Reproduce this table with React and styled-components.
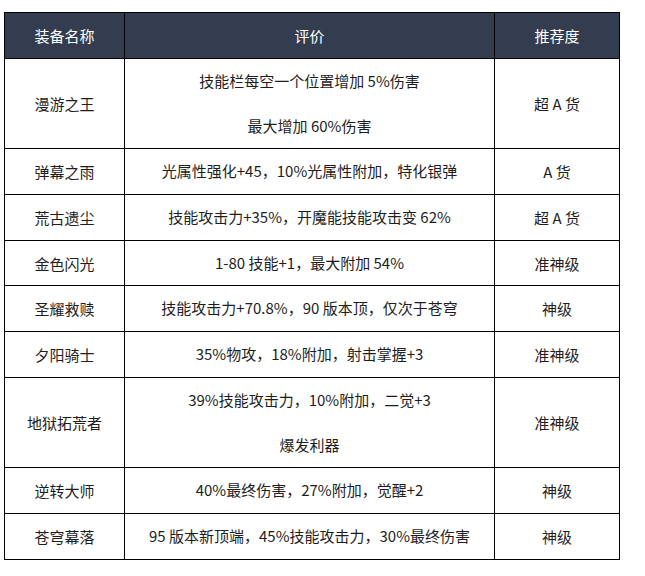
import React from "react";
import styled, { createGlobalStyle } from "styled-components";

const Global = createGlobalStyle`
  html, body { margin: 0; padding: 0; background: #fff; }
  body { font-family: "Noto Sans CJK SC", "Microsoft YaHei", sans-serif; }
`;

const Page = styled.div`
  padding: 12px 0 0 4px;
`;

const Table = styled.table`
  border-collapse: collapse;
  table-layout: fixed;
  width: 615px;
  font-size: 15px;
  color: #1e1e1e;
`;

const HeadCell = styled.th`
  background: #333d4f;
  color: #fff;
  font-weight: 400;
  height: 45px;
  padding: 0;
  border: 1px solid #000;
  text-align: center;
  vertical-align: middle;
`;

const Cell = styled.td`
  border: 1px solid #000;
  padding: 0;
  text-align: center;
  vertical-align: middle;
`;

const Line = styled.div`
  line-height: 44.7px;
  height: 44.7px;
  white-space: nowrap;
`;

const rows = [
  ["漫游之王", ["技能栏每空一个位置增加 5%伤害", "最大增加 60%伤害"], "超 A 货"],
  ["弹幕之雨", ["光属性强化+45，10%光属性附加，特化银弹"], "A 货"],
  ["荒古遗尘", ["技能攻击力+35%，开魔能技能攻击变 62%"], "超 A 货"],
  ["金色闪光", ["1-80 技能+1，最大附加 54%"], "准神级"],
  ["圣耀救赎", ["技能攻击力+70.8%，90 版本顶，仅次于苍穹"], "神级"],
  ["夕阳骑士", ["35%物攻，18%附加，射击掌握+3"], "准神级"],
  ["地狱拓荒者", ["39%技能攻击力，10%附加，二觉+3", "爆发利器"], "准神级"],
  ["逆转大师", ["40%最终伤害，27%附加，觉醒+2"], "神级"],
  ["苍穹幕落", ["95 版本新顶端，45%技能攻击力，30%最终伤害"], "神级"],
];

export default function App() {
  return (
    <Page>
      <Global />
      <Table>
        <colgroup>
          <col style={{ width: 120 }} />
          <col style={{ width: 370 }} />
          <col style={{ width: 125 }} />
        </colgroup>
        <thead>
          <tr>
            <HeadCell>装备名称</HeadCell>
            <HeadCell>评价</HeadCell>
            <HeadCell>推荐度</HeadCell>
          </tr>
        </thead>
        <tbody>
          {rows.map(([name, lines, rank]) => (
            <tr key={name}>
              <Cell>{name}</Cell>
              <Cell>
                {lines.map((l) => (
                  <Line key={l}>{l}</Line>
                ))}
              </Cell>
              <Cell>{rank}</Cell>
            </tr>
          ))}
        </tbody>
      </Table>
    </Page>
  );
}
